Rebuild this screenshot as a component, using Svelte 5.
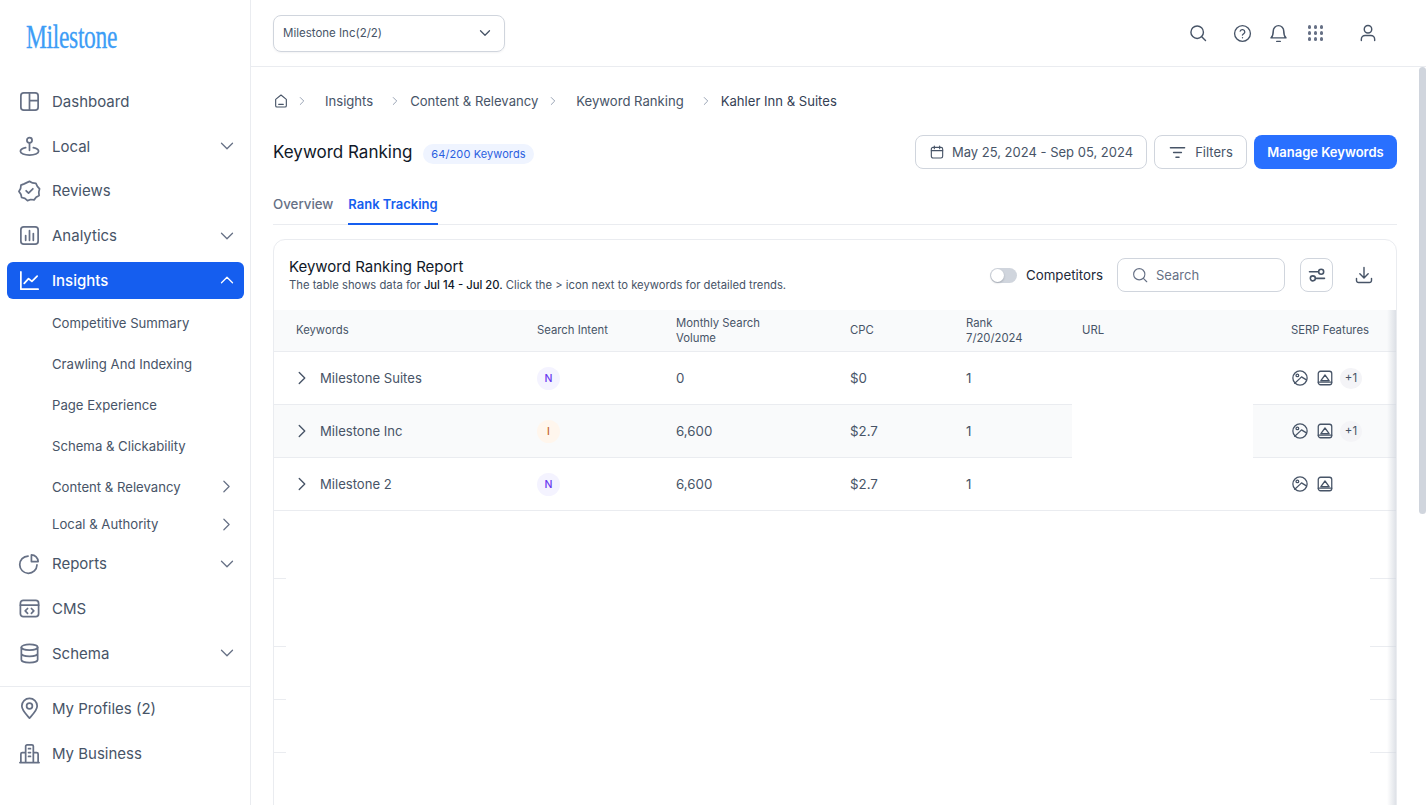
<script>
  const icons = {
    dashboard: '<rect x="3" y="3" width="18" height="18" rx="3"/><path d="M12 3v18M12 11h9"/>',
    local: '<circle cx="12" cy="5.5" r="2.7"/><path d="M12 8.2V16"/><path d="M8 13.2C4.8 13.9 2.5 15.2 2.5 17c0 2.3 4.2 4 9.5 4s9.5-1.7 9.5-4c0-1.8-2.3-3.1-5.5-3.8"/>',
    reviews: '<path d="M12 2.5l3.2 1.6 3.5.4 1.5 3.2 2.3 2.6-.8 3.4.3 3.5-3.1 1.8-2.1 2.8-3.5-.4-3.4 1.1-2.7-2.3-3.4-.9-.8-3.4-2-2.9 1.7-3.1.4-3.5 3.3-1.3z"/><path d="M8.5 12.3l2.5 2.4 4.5-4.5"/>',
    analytics: '<rect x="3" y="3" width="18" height="18" rx="3"/><path d="M8 17v-5M12 17V7M16 17v-7"/>',
    insights: '<path d="M3 3v18h18"/><path d="M6.5 15l4.5-5 3.5 3 5.5-5.5"/>',
    reports: '<path d="M10.5 4.2A9 9 0 1 0 19.8 13.5"/><path d="M14 3a7 7 0 0 1 7 7h-7z"/>',
    cms: '<rect x="2.5" y="3.5" width="19" height="17" rx="3"/><path d="M2.5 8.5h19M10 12l-2.5 2.5L10 17M14 12l2.5 2.5L14 17"/>',
    schema: '<ellipse cx="12" cy="5.5" rx="8.5" ry="3"/><path d="M3.5 5.5v13c0 1.7 3.8 3 8.5 3s8.5-1.3 8.5-3v-13M3.5 12c0 1.7 3.8 3 8.5 3s8.5-1.3 8.5-3"/>',
    pin: '<path d="M12 22c4-4.5 8-8 8-12.5a8 8 0 0 0-16 0C4 14 8 17.5 12 22z"/><circle cx="12" cy="9.5" r="3"/>',
    business: '<path d="M2 21.5h20M8 21V4.5A1.5 1.5 0 0 1 9.5 3h5A1.5 1.5 0 0 1 16 4.5V21M8 11H4.5A1.5 1.5 0 0 0 3 12.5V21M16 11h3.5a1.5 1.5 0 0 1 1.5 1.5V21M11 7h2M11 11h2M11 15h2"/>',
    down: '<path d="M6 9l6 6 6-6"/>',
    up: '<path d="M6 15l6-6 6 6"/>',
    right: '<path d="M9 6l6 6-6 6"/>',
    search: '<circle cx="11" cy="11" r="7.5"/><path d="M21 21l-4.5-4.5"/>',
    help: '<circle cx="12" cy="12" r="10"/><path d="M9.1 9a3 3 0 0 1 5.8 1c0 2-3 2.8-3 4"/><path d="M12 17.3v.1"/>',
    bell: '<path d="M6 9a6 6 0 0 1 12 0c0 4.5 1 6.5 2.5 8h-17C5 15.5 6 13.5 6 9z"/><path d="M10 21h4"/>',
    user: '<circle cx="12" cy="7.5" r="4.5"/><path d="M4 21v-1.5A4.5 4.5 0 0 1 8.5 15h7a4.5 4.5 0 0 1 4.5 4.5V21"/>',
    home: '<path d="M4 9.5L12 3l8 6.5V19a2 2 0 0 1-2 2H6a2 2 0 0 1-2-2z"/><path d="M8.5 17h7"/>',
    calendar: '<rect x="3.5" y="5" width="17" height="16" rx="2.5"/><path d="M3.5 10h17M8 3v4M16 3v4"/>',
    filter: '<path d="M3 6h18M7 12h10M10 18h4"/>',
    sliders: '<path d="M3 8h10M21 16H11"/><circle cx="17" cy="8" r="3"/><circle cx="7" cy="16" r="3"/>',
    download: '<path d="M12 3v12M7 10.5l5 5 5-5M3 16v2.5A2.5 2.5 0 0 0 5.5 21h13a2.500 2.500 0 0 0 2.500-2.500V16"/>',
    ball: '<circle cx="12" cy="12" r="9.5"/><circle cx="8.5" cy="8.5" r="1.8"/><path d="M5 19l7-6.5 2-2 6.5 4"/>',
    image: '<rect x="3" y="3" width="18" height="18" rx="3"/><path d="M6.5 15.5L12 8l5.5 7.5zM3 17.5h18"/>'
  };

  const mainNav = [
    { label: 'Dashboard', icon: 'dashboard' },
    { label: 'Local', icon: 'local', caret: 'down' },
    { label: 'Reviews', icon: 'reviews' },
    { label: 'Analytics', icon: 'analytics', caret: 'down' },
    { label: 'Insights', icon: 'insights', caret: 'up', active: true }
  ];
  const subNav = [
    { label: 'Competitive Summary' },
    { label: 'Crawling And Indexing' },
    { label: 'Page Experience' },
    { label: 'Schema & Clickability' },
    { label: 'Content & Relevancy', more: true },
    { label: 'Local & Authority', more: true, short: true }
  ];
  const lowerNav = [
    { label: 'Reports', icon: 'reports', caret: 'down' },
    { label: 'CMS', icon: 'cms' },
    { label: 'Schema', icon: 'schema', caret: 'down' }
  ];
  const footerNav = [
    { label: 'My Profiles (2)', icon: 'pin' },
    { label: 'My Business', icon: 'business' }
  ];
  const crumbs = ['Insights', 'Content & Relevancy', 'Keyword Ranking', 'Kahler Inn & Suites'];
  const rows = [
    { name: 'Milestone Suites', intent: 'N', volume: '0', cpc: '$0', rank: '1', extra: true },
    { name: 'Milestone Inc', intent: 'I', volume: '6,600', cpc: '$2.7', rank: '1', extra: true, hover: true },
    { name: 'Milestone 2', intent: 'N', volume: '6,600', cpc: '$2.7', rank: '1', last: true }
  ];
  const ghostRows = [68, 68, 53, 53];
</script>

{#snippet icon(name, size = 24, width = 1.7)}
  <svg class="ico" viewBox="0 0 24 24" width={size} height={size} fill="none" stroke="currentColor" stroke-width={width} stroke-linecap="round" stroke-linejoin="round">
    {@html icons[name]}
  </svg>
{/snippet}

{#snippet navItem(item)}
  <div class="nav-item" class:active={item.active}>
    {@render icon(item.icon, 23, 1.8)}
    <span class="nav-label">{item.label}</span>
    {#if item.caret}
      <span class="caret">{@render icon(item.caret, 22, 1.4)}</span>
    {/if}
  </div>
{/snippet}

<div class="app">
  <aside class="sidebar">
    <div class="logo"><span>Milestone</span></div>
    <nav class="nav">
      {#each mainNav as item}
        {@render navItem(item)}
      {/each}
    </nav>
    <div class="sub">
      {#each subNav as item}
        <div class="sub-item" class:short={item.short}>
          <span>{item.label}</span>
          {#if item.more}
            <span class="caret">{@render icon('right', 21, 1.4)}</span>
          {/if}
        </div>
      {/each}
    </div>
    <nav class="nav lower">
      {#each lowerNav as item}
        {@render navItem(item)}
      {/each}
    </nav>
    <nav class="nav footer">
      {#each footerNav as item}
        {@render navItem(item)}
      {/each}
    </nav>
  </aside>

  <div class="page">
    <header class="topbar">
      <div class="org-select">
        <span>Milestone Inc(2/2)</span>
        {@render icon('down', 18)}
      </div>
      <div class="top-icons">
        <span class="i-search">{@render icon('search', 20)}</span>
        <span class="i-help">{@render icon('help', 19)}</span>
        <span class="i-bell">{@render icon('bell', 21)}</span>
        <span class="grid-dots">
          {#each Array(9) as _}<i></i>{/each}
        </span>
        <span class="i-user">{@render icon('user', 20)}</span>
      </div>
    </header>

    <main class="content">
      <div class="crumbs">
        <span class="home">{@render icon('home', 16)}</span>
        {#each crumbs as crumb, i}
          <span class="sep" class:tight={i % 2 === 1}>{@render icon('right', 14)}</span>
          <span class="crumb" class:tight={i % 2 === 1}>{crumb}</span>
        {/each}
      </div>

      <div class="title-row">
        <h1>Keyword Ranking</h1>
        <span class="badge">64/200 Keywords</span>
        <div class="actions">
          <button class="btn date">{@render icon('calendar', 16)}May 25, 2024 - Sep 05, 2024</button>
          <button class="btn filters">{@render icon('filter', 19)}Filters</button>
          <button class="btn primary">Manage Keywords</button>
        </div>
      </div>

      <div class="tabs">
        <span class="tab">Overview</span>
        <span class="tab current">Rank Tracking</span>
      </div>

      <section class="card">
        <div class="card-head">
          <div class="card-title">
            <h2>Keyword Ranking Report</h2>
            <p>The table shows data for <b>Jul 14 - Jul 20.</b> Click the &gt; icon next to keywords for detailed trends.</p>
          </div>
          <div class="toggle"><i></i></div>
          <span class="toggle-label">Competitors</span>
          <div class="search">
            {@render icon('search', 18, 1.5)}
            <span>Search</span>
          </div>
          <button class="square">{@render icon('sliders', 20, 1.9)}</button>
          <span class="dl">{@render icon('download', 20)}</span>
        </div>

        <div class="thead table-grid">
          <div class="c-kw">Keywords</div>
          <div>Search Intent</div>
          <div class="two">Monthly Search<br>Volume</div>
          <div>CPC</div>
          <div class="two">Rank<br>7/20/2024</div>
          <div class="c-url">URL</div>
          <div class="c-serp">SERP Features</div>
        </div>

        {#each rows as row}
          <div class="row table-grid" class:hover={row.hover}>
            <div class="c-kw name">{@render icon('right', 22, 1.5)}<span>{row.name}</span></div>
            <div><span class="intent {row.intent === 'N' ? 'nav-intent' : 'info-intent'}">{row.intent}</span></div>
            <div>{row.volume}</div>
            <div>{row.cpc}</div>
            <div>{row.rank}</div>
            <div class="url-cell" class:open={!row.last}></div>
            <div class="c-serp serp">
              {@render icon('ball', 18)}
              {@render icon('image', 18)}
              {#if row.extra}<span class="plus">+1</span>{/if}
            </div>
          </div>
        {/each}

        {#each ghostRows as h}
          <div class="ghost" style="height: {h}px"><span class="g-left"></span><span class="g-right"></span></div>
        {/each}

        <div class="edge-shadow"></div>
      </section>
    </main>
    <div class="scrollbar"></div>
  </div>
</div>

<style>
  :global(body) {
    font-family: Inter, "Liberation Sans", sans-serif;
    color: #475467;
    background: #fff;
    overflow: hidden;
  }

  .app {
    display: flex;
    height: 805px;
    overflow: hidden;
  }

  .ico {
    display: block;
    flex: none;
  }

  .sidebar {
    width: 250px;
    flex: none;
    border-right: 1px solid #eaecf0;
  }

  .logo {
    height: 82.75px;
    padding-left: 26px;
    box-sizing: border-box;
    padding-top: 18px;
    font-family: "Liberation Serif", serif;
    font-size: 33px;
    line-height: 38px;
    color: #3d9df6;
    -webkit-text-stroke: 0.3px #3d9df6;
  }

  .logo span {
    display: inline-block;
    transform: scaleX(0.714);
    transform-origin: left center;
    letter-spacing: -0.5px;
  }

  .nav {
    margin: 0 6px 0 7px;
    display: flex;
    flex-direction: column;
    gap: 7.75px;
  }

  .nav-item {
    height: 37px;
    box-sizing: border-box;
    display: flex;
    align-items: center;
    border-radius: 6px;
    padding: 0 6px 0 11px;
    font-size: 15px;
    color: #475467;
  }

  .nav-item .ico {
    color: #667085;
  }

  .nav-label {
    margin-left: 11px;
  }

  .caret {
    margin-left: auto;
    color: #667085;
  }

  .nav-item.active {
    background: #155eef;
    color: #fff;
    font-weight: 500;
  }

  .nav-item.active .ico {
    color: #fff;
  }

  .sub {
    margin-top: 3.25px;
    padding: 0 13px 0 52px;
  }

  .sub-item {
    height: 41px;
    display: flex;
    align-items: center;
    font-size: 13.15px;
    color: #475467;
  }

  .sub-item.short {
    height: 34px;
  }

  .lower {
    margin-top: 4.25px;
  }

  .footer {
    margin: 14.25px 0 0;
    padding: 3.25px 6px 0 7px;
    border-top: 1px solid #eaecf0;
  }

  .page {
    flex: 1;
    min-width: 0;
    position: relative;
  }

  .topbar {
    height: 66px;
    border-bottom: 1px solid #eaecf0;
    display: flex;
    align-items: center;
    padding-left: 22px;
  }

  .org-select {
    width: 232px;
    height: 37px;
    box-sizing: border-box;
    border: 1px solid #d0d5dd;
    border-radius: 8px;
    display: flex;
    align-items: center;
    justify-content: space-between;
    padding: 0 10px 0 9px;
    font-size: 11.5px;
    color: #475467;
    box-shadow: 0 1px 2px rgba(16, 24, 40, 0.05);
  }

  .top-icons {
    margin-left: auto;
    margin-right: 48px;
    display: flex;
    align-items: center;
    color: #475467;
  }

  .i-help { margin-left: 25px; }
  .i-bell { margin-left: 16px; }
  .grid-dots { margin-left: 19px; }
  .i-user { margin-left: 35px; }

  .grid-dots {
    display: grid;
    grid-template-columns: repeat(3, 3.5px);
    gap: 2.5px;
  }

  .grid-dots i {
    width: 3.5px;
    height: 3.5px;
    border-radius: 50%;
    background: #667085;
  }

  .content {
    padding: 0 29px 0 22px;
  }

  .crumbs {
    height: 68px;
    display: flex;
    align-items: center;
    font-size: 13.1px;
    color: #475467;
  }

  .home {
    margin-right: 6px;
    color: #475467;
  }

  .sep {
    color: #98a2b3;
    margin-right: 16px;
  }

  .sep.tight {
    margin-right: 8px;
  }

  .crumb {
    margin-right: 15px;
  }

  .crumb.tight {
    margin-right: 8px;
  }

  .crumb:last-child {
    color: #344054;
  }

  .title-row {
    display: flex;
    align-items: center;
    height: 34px;
  }

  h1 {
    margin: 0;
    font-size: 17px;
    font-weight: 400;
    color: #101828;
  }

  .badge {
    margin-left: 11px;
    margin-top: 3px;
    height: 20px;
    line-height: 20px;
    padding: 0 8px;
    border-radius: 10px;
    background: #eff4ff;
    color: #2b5fe0;
    font-size: 11px;
    letter-spacing: 0.1px;
  }

  .actions {
    margin-left: auto;
    display: flex;
    gap: 7px;
  }

  .btn {
    height: 34px;
    box-sizing: border-box;
    border: 1px solid #d0d5dd;
    border-radius: 8px;
    background: #fff;
    font-family: inherit;
    font-size: 13px;
    color: #475467;
    display: flex;
    align-items: center;
    justify-content: center;
    padding: 0;
  }

  .date {
    width: 232px;
    gap: 7px;
  }

  .filters {
    width: 93px;
    gap: 8px;
  }

  .primary {
    width: 143px;
    border: none;
    background: #2970ff;
    color: #fff;
    font-weight: 600;
  }

  .tabs {
    display: flex;
    gap: 15px;
    height: 38px;
    margin-top: 17px;
    border-bottom: 1px solid #eaecf0;
    font-size: 13.3px;
  }

  .tab {
    color: #667085;
    font-weight: 500;
    line-height: 37px;
    height: 38px;
  }

  .current {
    color: #155eef;
    font-size: 13px;
    font-weight: 600;
    height: 37px;
    border-bottom: 2px solid #155eef;
  }

  .card {
    position: relative;
    margin-top: 14px;
    height: 580px;
    border: 1px solid #eaecf0;
    border-radius: 12px 12px 0 0;
    overflow: hidden;
    box-sizing: border-box;
  }

  .card-head {
    height: 70px;
    display: flex;
    align-items: center;
    padding: 0 22px 0 15px;
    box-sizing: border-box;
  }

  .card-title {
    margin-right: auto;
  }

  h2 {
    margin: 0;
    font-size: 15px;
    font-weight: 400;
    line-height: 20px;
    color: #101828;
  }

  .card-title p {
    margin: 1px 0 0;
    font-size: 11.25px;
    line-height: 15px;
    color: #475467;
  }

  .card-title b {
    font-weight: 500;
    color: #101828;
  }

  .toggle {
    width: 27px;
    height: 15px;
    border-radius: 8px;
    background: #d0d5dd;
    position: relative;
  }

  .toggle i {
    position: absolute;
    left: 1px;
    top: 1px;
    width: 13px;
    height: 13px;
    border-radius: 50%;
    background: #fff;
    box-shadow: 0 1px 2px rgba(16, 24, 40, 0.25);
  }

  .toggle-label {
    margin-left: 9px;
    font-size: 13.3px;
    color: #1d2939;
  }

  .search {
    margin-left: 14px;
    width: 168px;
    height: 34px;
    box-sizing: border-box;
    border: 1px solid #d0d5dd;
    border-radius: 8px;
    display: flex;
    align-items: center;
    gap: 7px;
    padding-left: 13px;
    font-size: 13px;
    color: #667085;
  }

  .square {
    margin-left: 15px;
    width: 33px;
    height: 34px;
    box-sizing: border-box;
    border: 1px solid #d0d5dd;
    border-radius: 8px;
    background: #fff;
    color: #475467;
    display: flex;
    align-items: center;
    justify-content: center;
    padding: 0;
  }

  .dl {
    margin-left: 21px;
    color: #475467;
  }

  .table-grid {
    display: grid;
    grid-template-columns: 263px 139px 174px 116px 106px 181px 143px;
    align-items: center;
  }

  .thead {
    height: 42px;
    box-sizing: border-box;
    padding-bottom: 1px;
    background: #f9fafb;
    border-bottom: 1px solid #eaecf0;
    font-size: 11.3px;
    line-height: 15px;
    color: #475467;
  }

  .two {
    margin-top: 2px;
  }

  .c-kw {
    padding-left: 22px;
  }

  .c-url {
    padding-left: 10px;
  }

  .c-serp {
    padding-left: 38px;
  }

  .row {
    height: 53px;
    box-sizing: border-box;
    border-bottom: 1px solid #eaecf0;
    font-size: 13.3px;
    color: #475467;
    align-items: start;
  }

  .row > div {
    height: 52px;
    display: flex;
    align-items: center;
    box-sizing: border-box;
  }

  .row.hover {
    background: #f9fafb;
  }

  .row > .url-cell.open {
    background: #fff;
    height: 53px;
  }

  .name {
    gap: 7px;
    font-size: 13.1px;
  }

  .name .ico {
    color: #475467;
    margin-left: -5px;
  }

  .intent {
    width: 23px;
    height: 23px;
    border-radius: 50%;
    display: flex;
    align-items: center;
    justify-content: center;
    font-size: 10.5px;
    font-weight: 500;
  }

  .nav-intent {
    background: #f4f3ff;
    color: #6938ef;
  }

  .info-intent {
    background: #fff6ed;
    color: #c4632b;
  }

  .serp {
    gap: 7px;
    color: #475467;
  }

  .plus {
    width: 22px;
    height: 21px;
    margin-left: -1px;
    border-radius: 50%;
    background: #f4f4f7;
    display: flex;
    align-items: center;
    justify-content: center;
    font-size: 11.5px;
    color: #475467;
  }

  .ghost {
    display: flex;
    justify-content: space-between;
    box-sizing: border-box;
    align-items: flex-end;
  }

  .g-left,
  .g-right {
    display: block;
    height: 1px;
    background: #eaecf0;
  }

  .g-left { width: 12px; }
  .g-right { width: 26px; }

  .edge-shadow {
    position: absolute;
    right: 0;
    top: 70px;
    bottom: 0;
    width: 9px;
    background: linear-gradient(to right, rgba(208, 213, 221, 0), rgba(208, 213, 221, 0.7));
    pointer-events: none;
  }

  .scrollbar {
    position: absolute;
    right: 0;
    top: 67px;
    width: 7px;
    height: 447px;
    border-radius: 4px;
    background: #d0d5dd;
  }
</style>
